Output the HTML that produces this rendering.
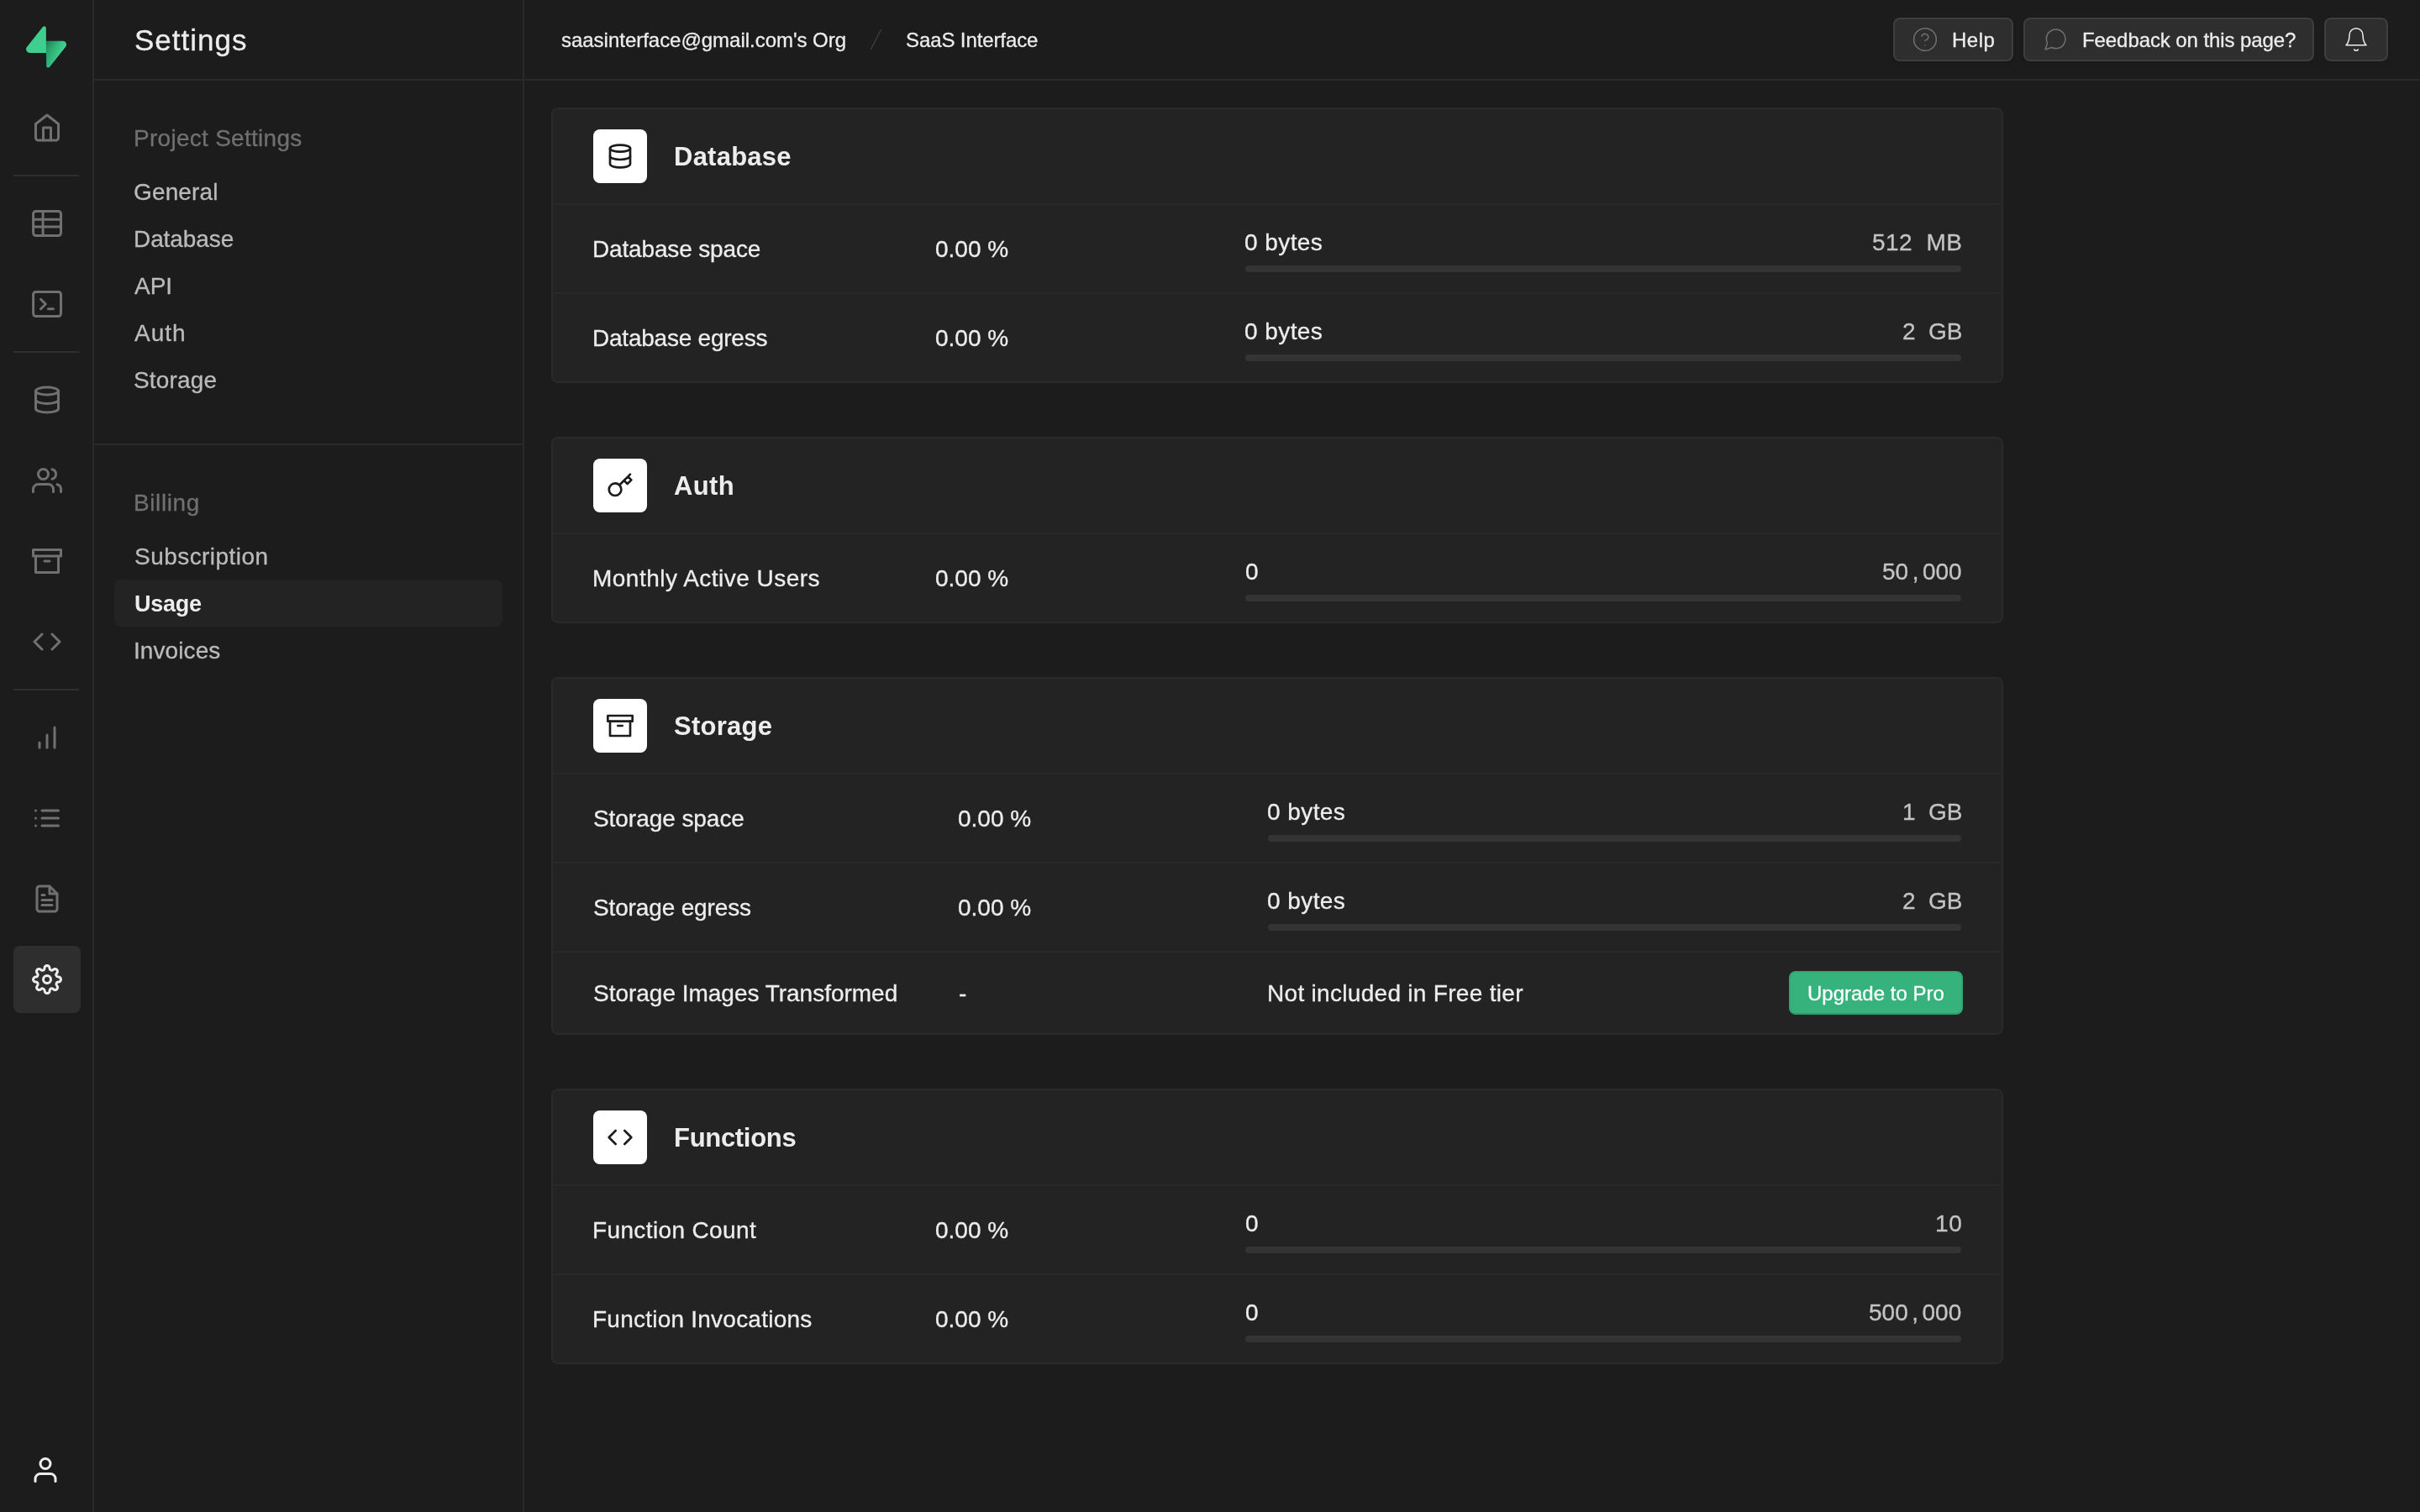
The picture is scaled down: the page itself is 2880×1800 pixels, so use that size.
<!DOCTYPE html>
<html lang="en"><head><meta charset="utf-8"><title>Usage | Supabase</title>
<style>
*{box-sizing:border-box;margin:0;padding:0}
html,body{width:2880px;height:1800px;overflow:hidden;background:#1c1c1c}
body{position:relative;font-family:"Liberation Sans",sans-serif;color:#ededed}
.abs,.ic,.t{position:absolute}
.t{white-space:pre;line-height:40px;height:40px;font-size:28px;will-change:transform;-webkit-text-stroke:0.3px currentColor}
.card{position:absolute;left:656px;width:1728px;background:#232323;border:2px solid #2a2a2a;border-radius:8px}
.ib{position:absolute;width:64px;height:64px;border-radius:8px;background:#fff}
.bar{position:absolute;height:8px;border-radius:4px;background:#343434}
.btn{position:absolute;top:21px;height:52px;border-radius:8px;background:#2e2e2e;border:2px solid #3e3e3e;box-shadow:0 2px 4px rgba(0,0,0,.12)}
</style></head><body>

<nav aria-label="Main navigation">
<div class="abs" style="left:110px;top:0;width:2px;height:1800px;background:#2a2a2a"></div>
<svg class="abs" style="left:31px;top:31px;width:48px;height:50px" viewBox="0 0 109 113" fill="none">
<path d="M63.7076 110.284C60.8481 113.885 55.0502 111.912 54.9813 107.314L53.9738 40.0627L99.1935 40.0627C107.384 40.0627 111.952 49.5228 106.859 55.9374L63.7076 110.284Z" fill="url(#pl0)"/>
<path d="M63.7076 110.284C60.8481 113.885 55.0502 111.912 54.9813 107.314L53.9738 40.0627L99.1935 40.0627C107.384 40.0627 111.952 49.5228 106.859 55.9374L63.7076 110.284Z" fill="url(#pl1)" fill-opacity="0.2"/>
<path d="M45.317 2.07103C48.1765 -1.53037 53.9745 0.442937 54.0434 5.041L54.4849 72.2922H9.83113C1.64038 72.2922 -2.92775 62.8321 2.1655 56.4175L45.317 2.07103Z" fill="#3ECF8E"/>
<defs><linearGradient id="pl0" x1="53.9738" y1="54.974" x2="94.1635" y2="71.8295" gradientUnits="userSpaceOnUse"><stop stop-color="#249361"/><stop offset="1" stop-color="#3ECF8E"/></linearGradient>
<linearGradient id="pl1" x1="36.1558" y1="30.578" x2="54.4844" y2="65.0806" gradientUnits="userSpaceOnUse"><stop/><stop offset="1" stop-opacity="0"/></linearGradient></defs></svg>
<div class="abs" style="left:16px;top:208px;width:78px;height:2px;background:#2e2e2e"></div>
<div class="abs" style="left:16px;top:418px;width:78px;height:2px;background:#2e2e2e"></div>
<div class="abs" style="left:16px;top:820px;width:78px;height:2px;background:#2e2e2e"></div>
<div class="abs" style="left:16px;top:1126px;width:80px;height:80px;border-radius:8px;background:#2e2e2e"></div>
<svg class="ic" style="left:38px;top:134px;width:36px;height:36px;color:#707070" viewBox="0 0 24 24" fill="none" stroke="currentColor" stroke-width="2" stroke-linecap="round" stroke-linejoin="round"><path d="M3 9l9-7 9 7v11a2 2 0 0 1-2 2H5a2 2 0 0 1-2-2z"/><polyline points="9 22 9 12 15 12 15 22"/></svg>
<svg class="ic" style="left:38px;top:248px;width:36px;height:36px;color:#707070" viewBox="0 0 24 24" fill="none" stroke="currentColor" stroke-width="2" stroke-linecap="round" stroke-linejoin="round"><rect x="1.07" y="2.27" width="21.93" height="19.4" rx="2.1"/><line x1="1.07" y1="8.8" x2="23" y2="8.8"/><line x1="1.07" y1="14.73" x2="23" y2="14.73"/><line x1="8.73" y1="2.27" x2="8.73" y2="20.6"/></svg>
<svg class="ic" style="left:38px;top:344px;width:36px;height:36px;color:#707070" viewBox="0 0 24 24" fill="none" stroke="currentColor" stroke-width="2" stroke-linecap="round" stroke-linejoin="round"><rect x="1.07" y="2.27" width="21.93" height="19.4" rx="2.1"/><polyline points="7 8.2 10.87 12 7 15.87"/><line x1="12.93" y1="15.75" x2="16.93" y2="15.75"/></svg>
<svg class="ic" style="left:38px;top:458px;width:36px;height:36px;color:#707070" viewBox="0 0 24 24" fill="none" stroke="currentColor" stroke-width="2" stroke-linecap="round" stroke-linejoin="round"><ellipse cx="12" cy="5" rx="9" ry="3"/><path d="M21 12c0 1.66-4 3-9 3s-9-1.34-9-3"/><path d="M3 5v14c0 1.66 4 3 9 3s9-1.34 9-3V5"/></svg>
<svg class="ic" style="left:38px;top:554px;width:36px;height:36px;color:#707070" viewBox="0 0 24 24" fill="none" stroke="currentColor" stroke-width="2" stroke-linecap="round" stroke-linejoin="round"><path d="M17 21v-2a4 4 0 0 0-4-4H5a4 4 0 0 0-4 4v2"/><circle cx="9" cy="7" r="4"/><path d="M23 21v-2a4 4 0 0 0-3-3.87"/><path d="M16 3.13a4 4 0 0 1 0 7.75"/></svg>
<svg class="ic" style="left:38px;top:650px;width:36px;height:36px;color:#707070" viewBox="0 0 24 24" fill="none" stroke="currentColor" stroke-width="2" stroke-linecap="round" stroke-linejoin="round"><polyline points="21 8 21 21 3 21 3 8"/><rect x="1" y="3" width="22" height="5"/><line x1="10" y1="12" x2="14" y2="12"/></svg>
<svg class="ic" style="left:38px;top:746px;width:36px;height:36px;color:#707070" viewBox="0 0 24 24" fill="none" stroke="currentColor" stroke-width="2" stroke-linecap="round" stroke-linejoin="round"><polyline points="16 18 22 12 16 6"/><polyline points="8 6 2 12 8 18"/></svg>
<svg class="ic" style="left:38px;top:860px;width:36px;height:36px;color:#707070" viewBox="0 0 24 24" fill="none" stroke="currentColor" stroke-width="2" stroke-linecap="round" stroke-linejoin="round"><line x1="12" y1="20" x2="12" y2="10"/><line x1="18" y1="20" x2="18" y2="4"/><line x1="6" y1="20" x2="6" y2="16"/></svg>
<svg class="ic" style="left:38px;top:956px;width:36px;height:36px;color:#707070" viewBox="0 0 24 24" fill="none" stroke="currentColor" stroke-width="2" stroke-linecap="round" stroke-linejoin="round"><line x1="8" y1="6" x2="21" y2="6"/><line x1="8" y1="12" x2="21" y2="12"/><line x1="8" y1="18" x2="21" y2="18"/><line x1="3" y1="6" x2="3.01" y2="6"/><line x1="3" y1="12" x2="3.01" y2="12"/><line x1="3" y1="18" x2="3.01" y2="18"/></svg>
<svg class="ic" style="left:38px;top:1052px;width:36px;height:36px;color:#707070" viewBox="0 0 24 24" fill="none" stroke="currentColor" stroke-width="2" stroke-linecap="round" stroke-linejoin="round"><path d="M14 2H6a2 2 0 0 0-2 2v16a2 2 0 0 0 2 2h12a2 2 0 0 0 2-2V8z"/><polyline points="14 2 14 8 20 8"/><line x1="16" y1="13" x2="8" y2="13"/><line x1="16" y1="17" x2="8" y2="17"/><polyline points="10 9 9 9 8 9"/></svg>
<svg class="ic" style="left:38px;top:1148px;width:36px;height:36px;color:#ededed" viewBox="0 0 24 24" fill="none" stroke="currentColor" stroke-width="2" stroke-linecap="round" stroke-linejoin="round"><circle cx="12" cy="12" r="3"/><path d="M19.4 15a1.65 1.65 0 0 0 .33 1.82l.06.06a2 2 0 0 1 0 2.83 2 2 0 0 1-2.83 0l-.06-.06a1.65 1.65 0 0 0-1.82-.33 1.65 1.65 0 0 0-1 1.51V21a2 2 0 0 1-2 2 2 2 0 0 1-2-2v-.09A1.65 1.65 0 0 0 9 19.4a1.65 1.65 0 0 0-1.82.33l-.06.06a2 2 0 0 1-2.83 0 2 2 0 0 1 0-2.83l.06-.06a1.65 1.65 0 0 0 .33-1.82 1.65 1.65 0 0 0-1.51-1H3a2 2 0 0 1-2-2 2 2 0 0 1 2-2h.09A1.65 1.65 0 0 0 4.6 9a1.65 1.65 0 0 0-.33-1.82l-.06-.06a2 2 0 0 1 0-2.83 2 2 0 0 1 2.83 0l.06.06a1.65 1.65 0 0 0 1.82.33H9a1.65 1.65 0 0 0 1-1.51V3a2 2 0 0 1 2-2 2 2 0 0 1 2 2v.09a1.65 1.65 0 0 0 1 1.51 1.65 1.65 0 0 0 1.82-.33l.06-.06a2 2 0 0 1 2.83 0 2 2 0 0 1 0 2.83l-.06.06a1.65 1.65 0 0 0-.33 1.82V9a1.65 1.65 0 0 0 1.51 1H21a2 2 0 0 1 2 2 2 2 0 0 1-2 2h-.09a1.65 1.65 0 0 0-1.51 1z"/></svg>
<svg class="ic" style="left:36px;top:1732px;width:36px;height:36px;color:#ededed" viewBox="0 0 24 24" fill="none" stroke="currentColor" stroke-width="2" stroke-linecap="round" stroke-linejoin="round"><path d="M20 21v-2a4 4 0 0 0-4-4H8a4 4 0 0 0-4 4v2"/><circle cx="12" cy="7" r="4"/></svg>
</nav>
<aside aria-label="Settings menu">
<div class="abs" style="left:622px;top:0;width:2px;height:1800px;background:#2a2a2a"></div>
<div class="abs" style="left:112px;top:94px;width:2768px;height:2px;background:#2a2a2a"></div>
<div class="abs" style="left:112px;top:528px;width:510px;height:2px;background:#2a2a2a"></div>
<div class="abs" style="left:136px;top:690px;width:462px;height:56px;border-radius:8px;background:#232323"></div>
<div class="t" id="t0" style="left:159.94px;top:28px;font-size:35px;letter-spacing:1.001px;">Settings</div>
<div class="t" id="t1" style="left:158.83px;top:145px;color:#707070;letter-spacing:0.280px;">Project Settings</div>
<div class="t" id="t2" style="left:158.92px;top:209px;color:#bbbbbb;letter-spacing:0.147px;">General</div>
<div class="t" id="t3" style="left:158.85px;top:265px;color:#bbbbbb;letter-spacing:-0.086px;">Database</div>
<div class="t" id="t4" style="left:160.07px;top:321px;color:#bbbbbb;letter-spacing:-0.018px;">API</div>
<div class="t" id="t5" style="left:160.07px;top:377px;color:#bbbbbb;letter-spacing:1.000px;">Auth</div>
<div class="t" id="t6" style="left:158.92px;top:433px;color:#bbbbbb;letter-spacing:0.167px;">Storage</div>
<div class="t" id="t7" style="left:158.83px;top:579px;color:#707070;letter-spacing:0.600px;">Billing</div>
<div class="t" id="t8" style="left:160.30px;top:643px;color:#bbbbbb;letter-spacing:0.455px;">Subscription</div>
<div class="t" id="t9" style="left:160.04px;top:699px;font-size:27px;font-weight:700;-webkit-text-stroke:0;letter-spacing:-0.262px;">Usage</div>
<div class="t" id="t10" style="left:158.86px;top:755px;color:#bbbbbb;letter-spacing:0.086px;">Invoices</div>
</aside>
<header>
<div class="t" id="t11" style="left:667.78px;top:28px;font-size:24px;letter-spacing:-0.024px;">saasinterface@gmail.com's Org</div>
<svg class="abs" style="left:1027px;top:31px;width:32px;height:32px" viewBox="0 0 24 24" fill="none" stroke="#404040" stroke-width="1" stroke-linecap="round"><path d="M16 3.549L7.12 20.600"/></svg>
<div class="t" id="t12" style="left:1077.56px;top:28px;font-size:24px;letter-spacing:-0.104px;">SaaS Interface</div>
<div class="btn" style="left:2253px;width:143px"></div>
<div class="btn" style="left:2408px;width:346px"></div>
<div class="btn" style="left:2766px;width:76px"></div>
<svg class="ic" style="left:2275px;top:31px;width:32px;height:32px;color:#707070" viewBox="0 0 24 24" fill="none" stroke="currentColor" stroke-width="1.15" stroke-linecap="round" stroke-linejoin="round"><circle cx="12" cy="12" r="10"/><path d="M9.09 9a3 3 0 0 1 5.83 1c0 2-3 3-3 3"/><line x1="12" y1="17" x2="12.01" y2="17"/></svg>
<div class="t" id="t13" style="left:2323.00px;top:28px;font-size:24px;letter-spacing:0.533px;">Help</div>
<svg class="ic" style="left:2430px;top:31px;width:32px;height:32px;color:#707070" viewBox="0 0 24 24" fill="none" stroke="currentColor" stroke-width="1.15" stroke-linecap="round" stroke-linejoin="round"><path d="M21 11.5a8.38 8.38 0 0 1-.9 3.8 8.5 8.5 0 0 1-7.6 4.7 8.38 8.38 0 0 1-3.8-.9L3 21l1.9-5.7a8.38 8.38 0 0 1-.9-3.8 8.5 8.5 0 0 1 4.7-7.6 8.38 8.38 0 0 1 3.8-.9h.5a8.48 8.48 0 0 1 8 8v.5z"/></svg>
<div class="t" id="t14" style="left:2477.50px;top:28px;font-size:24px;letter-spacing:-0.082px;">Feedback on this page?</div>
<svg class="ic" style="left:2788px;top:31px;width:32px;height:32px;color:#ededed" viewBox="0 0 24 24" fill="none" stroke="currentColor" stroke-width="1.15" stroke-linecap="round" stroke-linejoin="round"><path d="M18 8A6 6 0 0 0 6 8c0 7-3 9-3 9h18s-3-2-3-9"/><path d="M13.73 21a2 2 0 0 1-3.46 0"/></svg>
</header>
<main>
<section>
<div class="card" style="top:128px;height:328px"></div>
<div class="ib" style="left:706px;top:154px"></div>
<svg class="ic" style="left:722px;top:170px;width:32px;height:32px;color:#1c1c1c" viewBox="0 0 24 24" fill="none" stroke="currentColor" stroke-width="2" stroke-linecap="round" stroke-linejoin="round"><ellipse cx="12" cy="5" rx="9" ry="3"/><path d="M21 12c0 1.66-4 3-9 3s-9-1.34-9-3"/><path d="M3 5v14c0 1.66 4 3 9 3s9-1.34 9-3V5"/></svg>
<div class="t" id="t15" style="left:802.04px;top:167px;font-size:31px;font-weight:700;-webkit-text-stroke:0;letter-spacing:0.243px;">Database</div>
<div class="abs" style="left:658px;top:242px;width:1724px;height:2px;background:#292929"></div>
<div class="t" id="t16" style="left:705.00px;top:277px;letter-spacing:-0.154px;">Database space</div>
<div class="t" id="t17" style="left:1113.00px;top:277px;">0.00 %</div>
<div class="t" id="t18" style="left:1481.00px;top:269px;letter-spacing:0.426px;">0 bytes</div>
<div class="t" id="t19" style="left:2228.30px;top:269px;color:#c4c4c4;letter-spacing:0.453px;">512  MB</div>
<div class="bar" style="left:1482px;top:316px;width:852px"></div>
<div class="abs" style="left:658px;top:348px;width:1724px;height:2px;background:#292929"></div>
<div class="t" id="t20" style="left:705.00px;top:383px;letter-spacing:-0.229px;">Database egress</div>
<div class="t" id="t21" style="left:1113.00px;top:383px;">0.00 %</div>
<div class="t" id="t22" style="left:1481.00px;top:375px;letter-spacing:0.426px;">0 bytes</div>
<div class="t" id="t23" style="left:2264.00px;top:375px;color:#c4c4c4;letter-spacing:-0.057px;">2  GB</div>
<div class="bar" style="left:1482px;top:422px;width:852px"></div>
</section>
<section>
<div class="card" style="top:520px;height:222px"></div>
<div class="ib" style="left:706px;top:546px"></div>
<svg class="ic" style="left:722px;top:562px;width:32px;height:32px;color:#1c1c1c" viewBox="0 0 24 24" fill="none" stroke="currentColor" stroke-width="2" stroke-linecap="round" stroke-linejoin="round"><path d="M21 2l-2 2m-7.61 7.61a5.5 5.5 0 1 1-7.778 7.778 5.5 5.5 0 0 1 7.777-7.777zm0 0L15.5 7.5m0 0l3 3L22 7l-3-3m-3.5 3.5L19 4"/></svg>
<div class="t" id="t24" style="left:802.15px;top:559px;font-size:31px;font-weight:700;-webkit-text-stroke:0;letter-spacing:0.373px;">Auth</div>
<div class="abs" style="left:658px;top:634px;width:1724px;height:2px;background:#292929"></div>
<div class="t" id="t25" style="left:705.00px;top:669px;letter-spacing:0.483px;">Monthly Active Users</div>
<div class="t" id="t26" style="left:1113.00px;top:669px;">0.00 %</div>
<div class="t" id="t27" style="left:1482.37px;top:661px;">0</div>
<div class="t" id="t28" style="left:2240.00px;top:661px;color:#c4c4c4;">50<span style="margin:0 4.51px">,</span>000</div>
<div class="bar" style="left:1482px;top:708px;width:852px"></div>
</section>
<section>
<div class="card" style="top:806px;height:426px"></div>
<div class="ib" style="left:706px;top:832px"></div>
<svg class="ic" style="left:722px;top:848px;width:32px;height:32px;color:#1c1c1c" viewBox="0 0 24 24" fill="none" stroke="currentColor" stroke-width="2" stroke-linecap="round" stroke-linejoin="round"><polyline points="21 8 21 21 3 21 3 8"/><rect x="1" y="3" width="22" height="5"/><line x1="10" y1="12" x2="14" y2="12"/></svg>
<div class="t" id="t29" style="left:802.02px;top:845px;font-size:31px;font-weight:700;-webkit-text-stroke:0;letter-spacing:0.274px;">Storage</div>
<div class="abs" style="left:658px;top:920px;width:1724px;height:2px;background:#292929"></div>
<div class="t" id="t30" style="left:706.00px;top:955px;letter-spacing:-0.055px;">Storage space</div>
<div class="t" id="t31" style="left:1140.00px;top:955px;">0.00 %</div>
<div class="t" id="t32" style="left:1508.00px;top:947px;letter-spacing:0.426px;">0 bytes</div>
<div class="t" id="t33" style="left:2263.61px;top:947px;color:#c4c4c4;letter-spacing:-0.055px;">1  GB</div>
<div class="bar" style="left:1509px;top:994px;width:825px"></div>
<div class="abs" style="left:658px;top:1026px;width:1724px;height:2px;background:#292929"></div>
<div class="t" id="t34" style="left:706.00px;top:1061px;letter-spacing:-0.144px;">Storage egress</div>
<div class="t" id="t35" style="left:1140.00px;top:1061px;">0.00 %</div>
<div class="t" id="t36" style="left:1508.00px;top:1053px;letter-spacing:0.426px;">0 bytes</div>
<div class="t" id="t37" style="left:2264.00px;top:1053px;color:#c4c4c4;letter-spacing:-0.057px;">2  GB</div>
<div class="bar" style="left:1509px;top:1100px;width:825px"></div>
<div class="abs" style="left:658px;top:1132px;width:1724px;height:2px;background:#292929"></div>
<div class="t" id="t38" style="left:706.00px;top:1163px;letter-spacing:-0.016px;">Storage Images Transformed</div>
<div class="t" id="t39" style="left:1141.02px;top:1163px;">-</div>
<div class="t" id="t40" style="left:1507.67px;top:1163px;letter-spacing:0.300px;">Not included in Free tier</div>
<div class="abs" style="left:2129px;top:1156px;width:207px;height:52px;border-radius:8px;background:#36b27c;border:2px solid #32a873;border-bottom-color:#2d9a69"></div>
<div class="t" id="t41" style="left:2151.28px;top:1163px;font-size:24px;color:#fff;">Upgrade to Pro</div>
</section>
<section>
<div class="card" style="top:1296px;height:328px"></div>
<div class="ib" style="left:706px;top:1322px"></div>
<svg class="ic" style="left:722px;top:1338px;width:32px;height:32px;color:#1c1c1c" viewBox="0 0 24 24" fill="none" stroke="currentColor" stroke-width="2" stroke-linecap="round" stroke-linejoin="round"><polyline points="16 18 22 12 16 6"/><polyline points="8 6 2 12 8 18"/></svg>
<div class="t" id="t42" style="left:801.84px;top:1335px;font-size:31px;font-weight:700;-webkit-text-stroke:0;letter-spacing:-0.300px;">Functions</div>
<div class="abs" style="left:658px;top:1410px;width:1724px;height:2px;background:#292929"></div>
<div class="t" id="t43" style="left:705.00px;top:1445px;letter-spacing:0.372px;">Function Count</div>
<div class="t" id="t44" style="left:1113.00px;top:1445px;">0.00 %</div>
<div class="t" id="t45" style="left:1482.37px;top:1437px;">0</div>
<div class="t" id="t46" style="left:2302.84px;top:1437px;color:#c4c4c4;letter-spacing:0.584px;">10</div>
<div class="bar" style="left:1482px;top:1484px;width:852px"></div>
<div class="abs" style="left:658px;top:1516px;width:1724px;height:2px;background:#292929"></div>
<div class="t" id="t47" style="left:705.00px;top:1551px;letter-spacing:0.234px;">Function Invocations</div>
<div class="t" id="t48" style="left:1113.00px;top:1551px;">0.00 %</div>
<div class="t" id="t49" style="left:1482.37px;top:1543px;">0</div>
<div class="t" id="t50" style="left:2223.62px;top:1543px;color:#c4c4c4;">500<span style="margin:0 4.50px">,</span>000</div>
<div class="bar" style="left:1482px;top:1590px;width:852px"></div>
</section>
</main>
<script>(function(){var r=window.devicePixelRatio||1;if(Math.abs(r-1)>0.01){document.documentElement.style.zoom=1/r;}})();</script>
</body></html>
